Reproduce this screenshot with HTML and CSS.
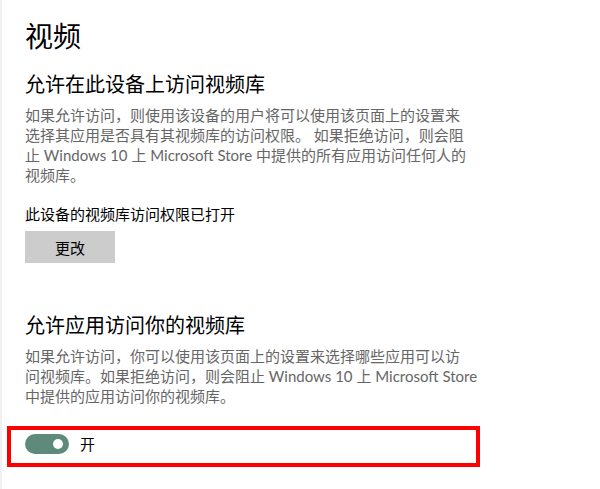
FILE: index.html
```html
<!DOCTYPE html>
<html lang="zh-CN">
<head>
<meta charset="utf-8">
<title>视频</title>
<link rel="stylesheet" href="styles.css">
</head>
<body>
<div class="page">
  <h1 class="title">视频</h1>

  <h2 class="heading">允许在此设备上访问视频库</h2>
  <p class="desc">如果允许访问，则使用该设备的用户将可以使用该页面上的设置来<br>选择其应用是否具有其视频库的访问权限。 如果拒绝访问，则会阻<br>止 Windows 10 上 Microsoft Store 中提供的所有应用访问任何人的<br>视频库。</p>
  <p class="status">此设备的视频库访问权限已打开</p>
  <button class="btn" type="button">更改</button>

  <h2 class="heading heading-2">允许应用访问你的视频库</h2>
  <p class="desc">如果允许访问，你可以使用该页面上的设置来选择哪些应用可以访<br>问视频库。如果拒绝访问，则会阻止 Windows 10 上 Microsoft Store<br>中提供的应用访问你的视频库。</p>

  <div class="toggle-row">
    <span class="toggle"><span class="knob"></span></span>
    <span class="toggle-label">开</span>
  </div>
</div>
</body>
</html>
```

FILE: styles.css
```css
html, body {
  margin: 0;
  padding: 0;
  background: #ffffff;
}

body {
  font-family: Lato, "Noto Sans CJK SC", sans-serif;
  color: #000;
}

.page {
  border-left: 2px solid #f1f1f1;
  padding: 18px 0 0 23px;
  min-height: 471px;
}

.title {
  margin: 0;
  font-size: 28px;
  line-height: 36px;
  font-weight: 400;
}

.heading {
  margin: 16px 0 0;
  font-size: 20px;
  line-height: 28px;
  font-weight: 400;
}

.heading-2 {
  margin-top: 48px;
}

.desc {
  margin: 7px 0 0;
  width: 490px;
  font-size: 15px;
  line-height: 20px;
  color: #666666;
}

.status {
  margin: 19px 0 0;
  font-size: 15px;
  line-height: 20px;
  color: #000;
}

.btn {
  display: block;
  margin: 7px 0 0;
  width: 90px;
  height: 32px;
  border: 0;
  padding: 0;
  background: #cccccc;
  font-family: inherit;
  font-size: 15px;
  color: #000;
}

.toggle-row {
  display: flex;
  align-items: flex-start;
  gap: 11px;
  box-sizing: border-box;
  width: 473px;
  height: 41px;
  margin: 20px 0 0 -18px;
  padding: 4px 0 0 14px;
  border: 4px solid #ff0000;
}

.toggle {
  position: relative;
  width: 44px;
  height: 20px;
  border-radius: 10px;
  background: #5e8a7c;
  flex: none;
}

.knob {
  position: absolute;
  top: 5px;
  right: 6px;
  width: 10px;
  height: 10px;
  border-radius: 50%;
  background: #ffffff;
}

.toggle-label {
  font-size: 15px;
  line-height: 20px;
}
```
